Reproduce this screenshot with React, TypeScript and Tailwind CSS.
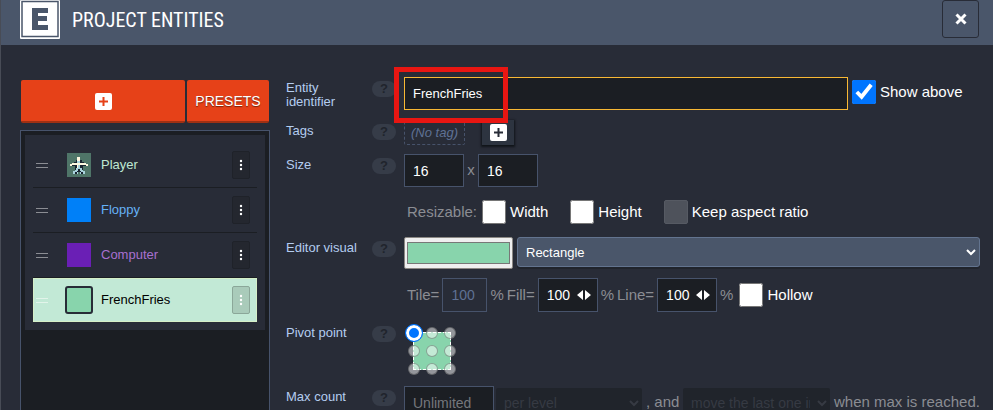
import React from "react";

const FONT = "font-['Liberation_Sans',Arial,sans-serif]";

function Plus({ color }: { color: string }) {
  return (
    <svg width="17" height="17" viewBox="0 0 17 17" aria-hidden="true">
      <rect width="17" height="17" rx="2" fill="#fff" />
      <path d="M8.5 4v9M4 8.5h9" stroke={color} strokeWidth="2" />
    </svg>
  );
}

function PlayerSprite() {
  return (
    <svg width="24" height="24" viewBox="0 0 24 24" shapeRendering="crispEdges" aria-hidden="true">
      <rect width="24" height="24" fill="#4f7568" />
      <path d="M9 7h6v2H9zM7 9h10v1H7zM5 12h3v1H5zM16 12h3v1h-3zM8 12h8v4H8zM8 16h8v3H8zM7 19h4v2H7zM13 19h4v2h-4z" fill="#182430" />
      <path d="M10 4h3v4h-3zM5 10h14v2H5zM3 11h2v2H3zM19 11h2v2h-2zM10 12h1v3h-1z" fill="#fdf8e0" />
      <path d="M10 8h3v2h-3zM11 12h2v4h-2zM9 15h2v3H9zM13 15h2v3h-2zM8 17h2v2H8zM14 17h2v2h-2zM6 18h2v3H6zM10 19h1v2h-1zM13 19h1v2h-1zM16 18h2v3h-2z" fill="#a9d3dc" />
    </svg>
  );
}

function Swatch({ className }: { className: string }) {
  return <span className={`block size-6 ${className}`} />;
}

const ENTITIES = [
  { name: "Player", text: "text-[#bfe8d3]", icon: <PlayerSprite /> },
  { name: "Floppy", text: "text-[#66b2f6]", icon: <Swatch className="bg-[#0080f8]" /> },
  { name: "Computer", text: "text-[#a870d0]", icon: <Swatch className="bg-[#6a1fb5]" /> },
  {
    name: "FrenchFries",
    text: "text-black",
    active: true,
    icon: <span className="-mx-0.5 block size-7 rounded-[3px] border-2 border-[#282c37] bg-[#88d4ac]" />,
  },
];

function EntityRow({ entity }: { entity: (typeof ENTITIES)[number] }) {
  const active = entity.active;
  return (
    <li
      className={`flex items-center ${
        active
          ? "h-11 border border-[#d5efc8] bg-[#c2e9d6] pr-[6px] pl-[2px]"
          : "h-[45px] border-b border-[#1b1e23] pr-[7px] pl-[3px]"
      }`}
    >
      <span className={`h-[5px] w-3 border-y ${active ? "border-[#e2f4ea]" : "border-[#8b8d93]"}`} />
      <span className="ml-[19px] w-[34px]">{entity.icon}</span>
      <span className={`flex-1 text-[13px] ${entity.text}`}>{entity.name}</span>
      <button
        type="button"
        aria-label={`${entity.name} menu`}
        className={`flex h-7 w-[18px] items-center justify-center rounded-xs border ${
          active ? "border-[#8ba799] bg-[#a9cbba]" : "border-[#1f2229] bg-[#24272f]"
        }`}
      >
        <svg width="4" height="12" viewBox="0 0 4 12" fill="#fff" aria-hidden="true">
          <circle cx="2" cy="2" r="1.2" />
          <circle cx="2" cy="6" r="1.2" />
          <circle cx="2" cy="10" r="1.2" />
        </svg>
      </button>
    </li>
  );
}

function Field({
  label,
  htmlFor,
  className = "",
  children,
}: {
  label: string;
  htmlFor: string;
  className?: string;
  children: React.ReactNode;
}) {
  return (
    <div className={`flex items-start ${className}`}>
      <label htmlFor={htmlFor} className="mt-1 w-20 shrink-0 text-[13px] leading-[14px] text-[#b4cdf0]">
        {label}
      </label>
      <button
        type="button"
        aria-label={`Help: ${label}`}
        className="mt-1 mr-2 ml-1.5 h-4 w-6 shrink-0 rounded-full bg-[#363c48] text-[13px] leading-4 font-bold text-[#20242c]"
      >
        ?
      </button>
      <div className="min-w-0 flex-1">{children}</div>
    </div>
  );
}

function Check({ label, checked, disabled }: { label: string; checked?: boolean; disabled?: boolean }) {
  return (
    <label className="flex items-center gap-1 text-[15px] leading-6 whitespace-nowrap text-white">
      <input
        type="checkbox"
        defaultChecked={checked}
        disabled={disabled}
        className={`size-6 accent-[#0075ff] ${disabled ? "appearance-none rounded-xs border border-[#565a63] bg-[#4e525b]" : ""}`}
      />
      {label}
    </label>
  );
}

const BOX = "border border-[#47536b] bg-[#1b1e23] px-2 text-[14px] text-white outline-none";

function Percent({ id, label }: { id: string; label: string }) {
  return (
    <>
      <label htmlFor={id}>{label}</label>
      <span className="mx-[3px] flex h-[34px] w-[60px] items-center border border-[#47536b] bg-[#1b1e23] pl-2">
        <input id={id} defaultValue="100" className="w-[30px] text-[14px] text-white outline-none" />
        <svg width="14" height="10" viewBox="0 0 14 10" fill="#fff" aria-hidden="true">
          <path d="M6 0v10L0 5zM8 0v10l6-5z" />
        </svg>
      </span>
      <span>%</span>
    </>
  );
}

const PIVOTS = Array.from({ length: 9 }, (_, i) => i);

export default function App() {
  return (
    <div className={`flex h-screen flex-col overflow-hidden border-l border-[#484c56] bg-[#282c37] text-[#8b8d93] ${FONT}`}>
      <header className="flex h-[45px] shrink-0 items-start bg-[#4a566a] pr-[14px] pl-[19px]">
        <svg width="40" height="39" viewBox="0 0 40 39" aria-hidden="true">
          <rect width="40" height="39" rx="1" fill="#fff" />
          <rect x="2" y="1.5" width="36" height="35" fill="none" stroke="#4a566a" strokeWidth="1.5" />
          <path d="M12 8h16v5H18v3h9v5h-9v4h10v5H12z" fill="#4a566a" />
        </svg>
        <h1 className="ml-3 flex-1 pt-1 font-['Roboto_Condensed','Liberation_Sans_Narrow',Roboto,sans-serif] text-[20px] leading-8 text-white">
          PROJECT ENTITIES
        </h1>
        <button
          type="button"
          aria-label="Close"
          className="flex h-[38px] w-[37px] items-center justify-center rounded-[3px] border border-[#282c37]"
        >
          <svg width="12" height="12" viewBox="0 0 12 12" aria-hidden="true">
            <path d="M1.5 1.500l9 9M10.500 1.500l-9 9" stroke="#fff" strokeWidth="3" />
          </svg>
        </button>
      </header>

      <main className="flex min-h-0 flex-1 pl-[19px]">
        <aside className="flex w-[250px] shrink-0 flex-col pt-[35px]">
          <div className="flex gap-0.5 px-px">
            <button
              type="button"
              aria-label="Add entity"
              className="flex h-[43px] flex-1 items-center justify-center rounded-xs border-b-2 border-[#a03013] bg-[#e64118] pt-0.5"
            >
              <Plus color="#e64118" />
            </button>
            <button
              type="button"
              className="h-[43px] w-[82px] rounded-xs border-b-2 border-[#a03013] bg-[#e64118] pt-0.5 text-[14px] text-white text-shadow-[0_1px_1px_#00000080]"
            >
              PRESETS
            </button>
          </div>
          <div className="mt-[7px] flex-1 border border-b-0 border-[#47536b] bg-[#1b1e23] p-1">
            <ul className="bg-[#282c37] p-2">
              {ENTITIES.map((e) => (
                <EntityRow key={e.name} entity={e} />
              ))}
            </ul>
          </div>
        </aside>

        <form className="ml-4 min-w-0 flex-1 pt-8 pr-[13px] text-[15px]">
          <Field label="Entity identifier" htmlFor="identifier">
            <div className="relative flex items-start gap-1">
              <input
                id="identifier"
                defaultValue="FrenchFries"
                className="h-[33px] min-w-0 flex-1 border border-[#f8b834] bg-[#1b1e23] px-2 text-[13px] text-white outline-none"
              />
              <div className="w-32 pt-[3px]">
                <Check label="Show above" checked />
              </div>
              <span className="pointer-events-none absolute -top-2.5 -left-2.5 z-10 h-14 w-[114px] border-[5px] border-[#e81612]" />
            </div>
          </Field>

          <Field label="Tags" htmlFor="add-tag" className="mt-[10px]">
            <div className="flex items-center gap-[17px]">
              <span className="h-[25px] w-[61px] rounded-xs border border-dashed border-[#47536b] text-center text-[13px] leading-6 text-[#5f7194] italic">
                (No tag)
              </span>
              <button
                id="add-tag"
                type="button"
                aria-label="Add tag"
                className="flex h-[25px] w-8 items-center justify-center bg-[#2d3440] shadow-[0_1px_2px_1px_#111419]"
              >
                <Plus color="#282c37" />
              </button>
            </div>
          </Field>

          <Field label="Size" htmlFor="width" className="mt-[9px]">
            <div className="flex items-center">
              <input id="width" defaultValue="16" className={`h-[33px] w-[60px] ${BOX}`} />
              <span className="w-[14px] text-center">x</span>
              <input aria-label="Height" defaultValue="16" className={`h-[33px] w-[60px] ${BOX}`} />
            </div>
            <div className="mt-[13px] flex items-center pl-[3px]">
              <span className="w-[75px]">Resizable:</span>
              <div className="flex gap-[22px]">
                <Check label="Width" />
                <Check label="Height" />
                <Check label="Keep aspect ratio" disabled />
              </div>
            </div>
          </Field>

          <Field label="Editor visual" htmlFor="color" className="mt-[13px]">
            <div className="flex items-start gap-1">
              <input
                id="color"
                type="color"
                defaultValue="#88d4ac"
                className="h-8 w-[109px] rounded-xs border border-[#8b8884] bg-[#efefef]"
              />
              <select
                aria-label="Render mode"
                className="h-[30px] min-w-0 flex-1 rounded-[3px] border border-[#63748f] bg-[#4a566a] px-1 text-[13px] text-white shadow-[0_2px_0_#20242c]"
              >
                <option>Rectangle</option>
              </select>
            </div>
            <div className="mt-[9px] flex items-center pl-[3px] whitespace-nowrap">
              <label htmlFor="tile">Tile=</label>
              <input
                id="tile"
                disabled
                defaultValue="100"
                className="mx-[3px] h-[34px] w-[45px] border border-[#47536b] px-2 text-[14px] text-[#5f7194]"
              />
              <span className="mr-[3px]">%</span>
              <Percent id="fill" label="Fill=" />
              <span className="mr-[3px]" />
              <Percent id="line" label="Line=" />
              <div className="ml-1.5">
                <Check label="Hollow" />
              </div>
            </div>
          </Field>

          <Field label="Pivot point" htmlFor="pivot-0" className="mt-[10px]">
            <div className="relative mt-0.5 ml-px grid w-[54px] grid-cols-3">
              <span className="absolute top-2 left-2 size-[38px] border border-dashed border-white bg-[#88d4ac]" />
              {PIVOTS.map((i) => (
                <span key={i} className="relative flex size-[18px] items-center justify-center">
                  <input
                    id={`pivot-${i}`}
                    type="radio"
                    name="pivot"
                    aria-label={`Pivot ${i + 1}`}
                    defaultChecked={i === 0}
                    className="size-3 shrink-0 appearance-none rounded-full border border-black/30 bg-white/50 checked:size-[18px] checked:border-[#0075ff] checked:bg-[#0075ff] checked:shadow-[inset_0_0_0_3px_#fff]"
                  />
                </span>
              ))}
            </div>
          </Field>

          <Field label="Max count" htmlFor="max" className="mt-2">
            <div className="flex items-center whitespace-nowrap">
              <input id="max" placeholder="Unlimited" className={`h-[33px] w-[90px] placeholder:text-[#75777c] ${BOX}`} />
              <select
                aria-label="Scope"
                disabled
                className="ml-[2px] h-[30px] w-[146px] rounded-xs bg-[#20242b] px-1 text-[14px] text-[#363a43]"
              >
                <option>per level</option>
              </select>
              <span className="w-[41px] pl-1">, and</span>
              <select
                aria-label="Behavior"
                disabled
                className="mr-1 h-[30px] w-[147px] rounded-xs bg-[#20242b] px-1 text-[14px] text-[#363a43]"
              >
                <option>move the last one instead of adding</option>
              </select>
              <span>when max is reached.</span>
            </div>
          </Field>
        </form>
      </main>
    </div>
  );
}
